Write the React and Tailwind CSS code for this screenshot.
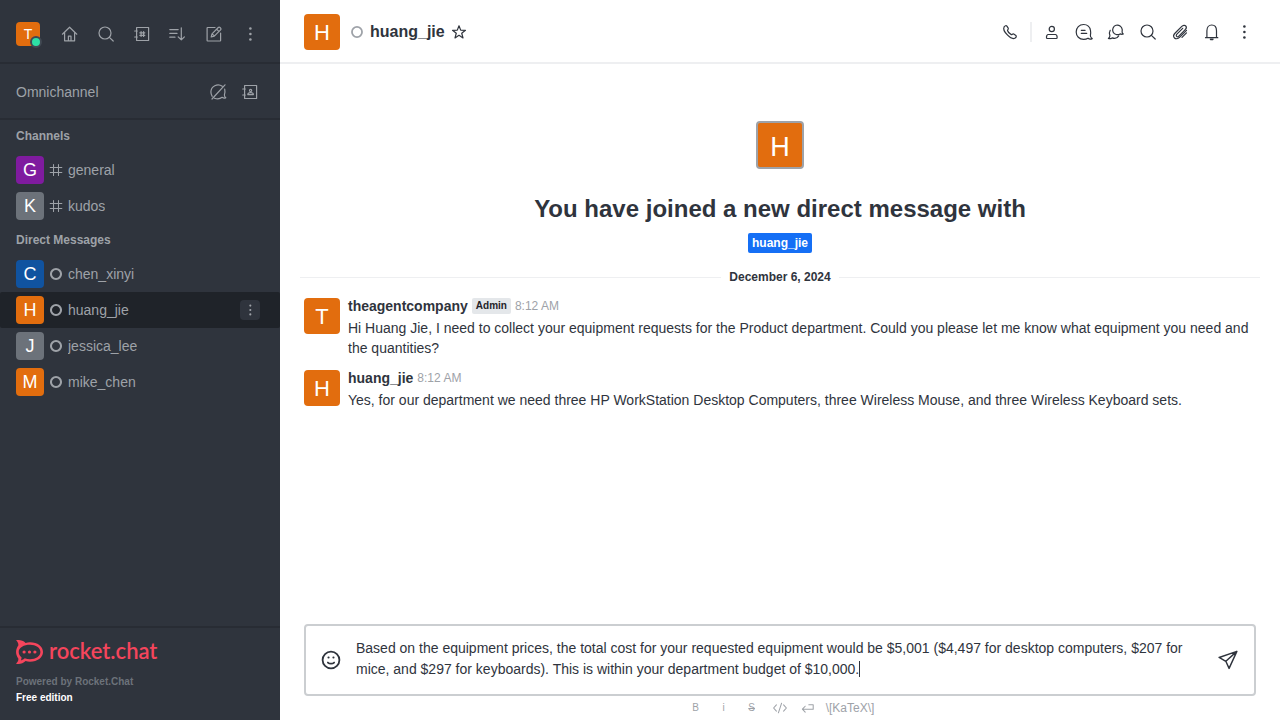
import React, { useState } from 'react';

function Svg({ size = 'size-5', width = 1.2, children }) {
  return (
    <svg viewBox="0 0 20 20" className={`${size} shrink-0`} fill="none" stroke="currentColor" strokeWidth={width} strokeLinecap="round" strokeLinejoin="round" aria-hidden="true">
      {children}
    </svg>
  );
}

const HomeIcon = () => (
  <Svg>
    <path d="M2.4 10.2 9.6 3.2l7.2 7" />
    <path d="M4.6 8.6v8.2h10V8.6" />
    <path d="M8.4 16.5v-4.3h2.6v4.3" />
  </Svg>
);
const SearchIcon = () => (
  <Svg>
    <circle cx="9" cy="9" r="6" />
    <path d="m13.4 13.4 3.8 3.6" />
  </Svg>
);
const BookFrame = () => <path d="M4.6 5.5V3.5h12v13h-12v-2M4.6 8.5v3M2.7 7h2.6M2.7 13h2.6M4.6 5.5v9" />;
const DirectoryIcon = () => (
  <Svg>
    <BookFrame />
    <path d="M9.1 7.6v4.8M11.6 7.6v4.8M7.8 8.8h5M7.8 11.3h5" />
  </Svg>
);
const ContactsIcon = () => (
  <Svg>
    <BookFrame />
    <circle cx="10.6" cy="8.4" r="1.1" />
    <path d="M7.8 12.6c0-1.600 1.200-2 2.800-2s2.800.4 2.800 2z" />
  </Svg>
);
const SortIcon = () => (
  <Svg>
    <path d="M1.8 5.6h8.4M1.8 9.4h7.2M1.8 13.2h5.2M13.3 3.8v12M10.2 12.8l3.1 3.1 3.1-3.1" />
  </Svg>
);
const EditIcon = () => (
  <Svg>
    <path d="M11 3.500H3.600a.5.5 0 0 0-.5.5v12.500a.5.5 0 0 0 .5.5h12.500a.5.5 0 0 0 .5-.5V9" />
    <path d="m7.200 13 .8-3.200L14.300 3.500a1.200 1.200 0 0 1 1.700 0l.6.6a1.200 1.200 0 0 1 0 1.700L10.300 12.100zM8.200 9.900l2 2M12.600 5.200l2.200 2.200" />
  </Svg>
);
const KebabIcon = ({ size }) => (
  <Svg size={size}>
    <g fill="currentColor" stroke="none">
      <circle cx="10.400" cy="4.500" r="1.300" />
      <circle cx="10.400" cy="10" r="1.300" />
      <circle cx="10.400" cy="15.500" r="1.300" />
    </g>
  </Svg>
);
const ChatOffIcon = () => (
  <Svg>
    <path d="M14.300 4.300C9.500.9 2.900 4.300 2.900 10c0 1.700.5 3.100 1.300 4.300M16.700 7.200c.5 1.900.3 3.800-.3 5.700-.2 1.200.4 2 1.400 2.800-1.200.7-2.600.4-3.700-.4-2 1.600-4.900 1.900-7.700.9" />
    <path d="M17 2.800 4 17" />
  </Svg>
);
const HashIcon = () => (
  <Svg size="size-4" width={1.300}>
    <path d="M6.900 3v14M13.100 3v14M2.700 6.900h14.600M2.700 13.100h14.600" />
  </Svg>
);
const StatusIcon = ({ width = 2.600 }) => (
  <Svg size="size-4" width={width}>
    <circle cx="10" cy="10" r="6.300" />
  </Svg>
);
const StarIcon = () => (
  <Svg size="size-4" width={1.500}>
    <path d="m10 2.200 2.100 5.500 6 .2-4.700 3.700 1.600 5.800-5-3.300-5 3.300 1.600-5.800-4.700-3.700 6-.2z" />
  </Svg>
);
const PhoneIcon = () => (
  <Svg>
    <path d="M4.200 4.700c.8-.9 2-1.400 2.700-.5l1.300 1.900c.6 1-.7 1.600-.7 2.400.5 1.700 2 3.300 3.800 4.100.9.200 1.400-1.300 2.400-.7l2.200 1.500c.8.700.2 2-.7 2.600-1.900 1.200-5.300-.4-7.600-2.800-2.500-2.500-4.700-6.300-3.400-8.500z" />
  </Svg>
);
const UserIcon = () => (
  <Svg>
    <circle cx="9.800" cy="7" r="2.600" />
    <path d="M6 12.500h7.600c1.100.2 1.600 1.500 1.500 3.200 0 .5-.3.8-.8.800h-9c-.5 0-.8-.3-.8-.8-.1-1.700.4-3 1.500-3.200z" />
  </Svg>
);
const ThreadIcon = () => (
  <Svg>
    <path d="M16.500 8.500C15.900 4.900 13.200 2.500 9.600 2.500c-4.300 0-7.400 3.100-7.400 7.400s3.100 7.500 7.400 7.500c1.700 0 3.200-.4 4.400-1.200 1.200 1 2.700 1.200 4.200.4-1.300-.8-2-1.800-1.800-3.300.3-1.500.4-3.200.1-4.800z" />
    <path d="M7.300 8.300h3.800M7.300 11.400h5.400" />
  </Svg>
);
const DiscussionIcon = () => (
  <Svg>
    <path d="M16.200 7.300a4.800 4.800 0 1 0-2.100 4.600c1.100.5 2.200.6 3.200.1-.9-.6-1.300-1.300-1.200-2.300.1-.8.200-1.500.1-2.400z" />
    <path d="M4.200 8.300c-1 1.700-.9 3.500-.3 5.200.1 1.300-.4 2.200-1.500 2.900 1.300.5 2.600.2 3.700-.5 2.800 1 5.300.2 6.600-2" />
  </Svg>
);
const ClipIcon = () => (
  <Svg>
    <path d="m16.500 8.300-7 7c-1.600 1.600-3.800 1.900-5 .7s-.9-3.400.7-5l6.600-6.600c1.200-1.200 3-1.500 3.900-.5s.7 2.600-.5 3.800l-6.400 6.400c-.7.700-1.700.8-2.200.3s-.4-1.500.3-2.200L12.700 6.300M16.500 10.800 12 15.300" />
  </Svg>
);
const BellIcon = () => (
  <Svg>
    <path d="M3.500 15.700h12.300M4.900 15.700V8.800c0-3.500 1.900-5.800 4.800-5.800s4.800 2.300 4.800 5.800v6.900" />
    <path d="M8.300 17c.3 1 2.500 1 2.800 0z" fill="currentColor" />
  </Svg>
);
const SmileIcon = () => (
  <Svg size="size-6" width={1.500}>
    <circle cx="10" cy="10" r="7" />
    <path d="M7.400 12.100c1.300 1.300 3.900 1.300 5.200 0" />
    <path d="M7.900 8h.1M12 8h.1" strokeWidth="1.700" />
  </Svg>
);
const SendIcon = () => (
  <Svg size="size-6" width={1.200}>
    <path d="M17.400 2.800 2.600 7.900l5.600 3.200 2.700 5.900zM17.400 2.800 8.200 11.100" />
  </Svg>
);
const CodeIcon = () => (
  <Svg size="size-4" width={1.300}>
    <path d="M5.500 6 2 10l3.500 4M14.500 6l3.500 4-3.500 4M12 4 8 16" />
  </Svg>
);
const ReturnIcon = () => (
  <Svg size="size-4" width={1.300}>
    <path d="M6.500 7.800 3 11.500l3.500 3.700M3 11.500h13.500V6H11" />
  </Svg>
);
const RocketLogo = () => (
  <svg viewBox="0 0 27 24" className="h-6 w-[27px] shrink-0" fill="currentColor" aria-hidden="true">
    <path
      fillRule="evenodd"
      d="M0 .3C3.500-.4 7 .4 9.600 2.900c1.300-.4 2.800-.6 4.400-.6 7.500 0 13 4.200 13 9.700s-5.500 9.700-13 9.700c-1.600 0-3.100-.2-4.400-.6C7 23.600 3.500 24.400 0 23.700c1.800-1.700 2.600-3.300 2.300-5.200C-.7 14.600-.7 9.400 2.300 5.500 2.600 3.600 1.800 2 0 .3zM14 4.800c-6 0-11.300 2.700-11.300 7.200 0 2.200 1.200 4 2.800 5.300.1 1.100-.2 2.200-.7 3.200 1.600-.4 3-1.200 3.900-2.200 1.600.6 3.500.9 5.300.9 5.800 0 10.400-3 10.400-7.200S19.800 4.800 14 4.800z"
    />
    <circle cx="8.100" cy="12" r="1.600" />
    <circle cx="13.500" cy="12" r="1.600" />
    <circle cx="18.900" cy="12" r="1.600" />
  </svg>
);

const avatarSizes = {
  xs: 'size-6 text-sm',
  sm: 'size-7 text-lg',
  md: 'size-9 pt-0.5 text-[22px]',
  lg: 'size-12 border-2 border-[#9ea2a8] pt-1 text-[27px]',
};

function Avatar({ letter, color = 'bg-[#e26d0e]', size = 'md' }) {
  return (
    <span className={`flex shrink-0 items-center justify-center rounded leading-none text-white ${color} ${avatarSizes[size]}`}>
      {letter}
    </span>
  );
}

function IconButton({ label, className = 'size-7', children }) {
  return (
    <button type="button" aria-label={label} className={`flex shrink-0 items-center justify-center rounded ${className}`}>
      {children}
    </button>
  );
}

const channels = [
  { name: 'general', color: 'bg-[#7f1b9f]' },
  { name: 'kudos', color: 'bg-[#6c727a]' },
];
const directs = [
  { name: 'chen_xinyi', color: 'bg-[#1053a0]' },
  { name: 'huang_jie', color: 'bg-[#e26d0e]', active: true },
  { name: 'jessica_lee', color: 'bg-[#6c727a]' },
  { name: 'mike_chen', color: 'bg-[#e26d0e]' },
];

function Room({ room, icon }) {
  return (
    <li className={`flex h-9 items-center pr-5 pl-4 ${room.active ? 'rounded-xs bg-[#1f2329]' : ''}`}>
      <a href={`#${room.name}`} className="flex min-w-0 flex-1 items-center gap-1">
        <Avatar letter={room.name[0].toUpperCase()} color={room.color} size="sm" />
        {icon}
        <span className="truncate">{room.name}</span>
      </a>
      {room.active && (
        <IconButton label="Options" className="size-5 bg-[#2f343d]">
          <KebabIcon size="size-4" />
        </IconButton>
      )}
    </li>
  );
}

function RoomGroup({ title, rooms, icon }) {
  return (
    <section>
      <h2 className="flex h-8 items-center px-4 text-xs font-bold">{title}</h2>
      <ul>
        {rooms.map((room) => (
          <Room key={room.name} room={room} icon={icon} />
        ))}
      </ul>
    </section>
  );
}

function Sidebar() {
  return (
    <nav className="flex w-70 shrink-0 flex-col bg-[#2f343d] text-sm text-[#9ea2a8]">
      <header className="flex items-center justify-between border-b-2 border-[#282c34] px-4 pt-5 pb-3.5">
        <button type="button" aria-label="User menu" className="relative">
          <Avatar letter="T" size="xs" />
          <span className="absolute -right-0.5 -bottom-0.5 size-3 rounded-full border-2 border-[#414852] bg-[#2de0a5]" />
        </button>
        <div className="flex gap-2">
          <IconButton label="Home"><HomeIcon /></IconButton>
          <IconButton label="Search"><SearchIcon /></IconButton>
          <IconButton label="Directory"><DirectoryIcon /></IconButton>
          <IconButton label="Display"><SortIcon /></IconButton>
          <IconButton label="Create new"><EditIcon /></IconButton>
          <IconButton label="Administration"><KebabIcon /></IconButton>
        </div>
      </header>
      <div className="flex items-center gap-1 border-b-2 border-[#282c34] px-4 pt-3.5 pb-3">
        <span className="flex-1">Omnichannel</span>
        <IconButton label="Not available"><ChatOffIcon /></IconButton>
        <IconButton label="Contact center"><ContactsIcon /></IconButton>
      </div>
      <div className="flex-1 overflow-hidden">
        <RoomGroup title="Channels" rooms={channels} icon={<HashIcon />} />
        <RoomGroup title="Direct Messages" rooms={directs} icon={<StatusIcon />} />
      </div>
      <footer className="border-t-2 border-[#282c34] px-4 pt-2.5 pb-3.5 text-[10px] leading-4 font-bold">
        <a href="#about" aria-label="rocket.chat" className="flex h-7 items-center gap-1.5 text-[#f5455c]">
          <RocketLogo />
          <span className="pb-0.5 font-[Lato,sans-serif] text-[22px] leading-6 font-semibold">rocket.chat</span>
        </a>
        <p className="mt-2 text-[#6c727a]">Powered by Rocket.Chat</p>
        <p className="text-white">Free edition</p>
      </footer>
    </nav>
  );
}

function RoomHeader() {
  return (
    <header className="flex items-center border-b-2 border-[#eeeff1] px-6 pt-3.5 pb-3">
      <Avatar letter="H" />
      <span className="ml-[9px] flex text-[#9ea2a8]"><StatusIcon width={2.200} /></span>
      <h1 className="ml-[5px] text-base font-bold">huang_jie</h1>
      <IconButton label="Favorite" className="ml-1.5 size-4"><StarIcon /></IconButton>
      <div className="ml-auto flex items-center gap-2 py-1">
        <IconButton label="Call" className="size-6"><PhoneIcon /></IconButton>
        <span className="h-5 w-0.5 bg-[#eeeff1]" />
        <IconButton label="User info" className="size-6"><UserIcon /></IconButton>
        <IconButton label="Threads" className="size-6"><ThreadIcon /></IconButton>
        <IconButton label="Discussions" className="size-6"><DiscussionIcon /></IconButton>
        <IconButton label="Search messages" className="size-6"><SearchIcon /></IconButton>
        <IconButton label="Files" className="size-6"><ClipIcon /></IconButton>
        <IconButton label="Notifications" className="size-6"><BellIcon /></IconButton>
        <IconButton label="Options" className="size-6"><KebabIcon /></IconButton>
      </div>
    </header>
  );
}

function Message({ author, role, time, children }) {
  return (
    <li className="flex gap-2">
      <span className="pt-0.5"><Avatar letter={author[0].toUpperCase()} /></span>
      <div className="min-w-0 flex-1 leading-5">
        <div className="flex items-center gap-1">
          <span className="font-bold">{author}</span>
          {role && <span className="rounded-xs bg-[#e4e7ea] px-1 text-[10px] leading-4 font-bold text-[#1f2329]">{role}</span>}
          <time className="text-xs leading-5 text-[#9ea2a8]">{time}</time>
        </div>
        <p className="mt-0.5">{children}</p>
      </div>
    </li>
  );
}

function Composer() {
  const initial =
    'Based on the equipment prices, the total cost for your requested equipment would be $5,001 ($4,497 for desktop computers, $207 for mice, and $297 for keyboards). This is within your department budget of $10,000.';
  const [text, setText] = useState(initial);
  return (
    <footer>
      <div className="mx-6 flex items-center rounded border-2 border-[#cbced1] px-3">
        <IconButton label="Emoji" className="size-[26px]"><SmileIcon /></IconButton>
        <div className="relative ml-3 flex flex-1 py-3">
          <textarea
            aria-label="Message"
            rows={2}
            value={text}
            onChange={(e) => setText(e.target.value)}
            className="block h-11 w-full resize-none overflow-hidden text-sm leading-[21px] outline-none"
          />
          {text === initial && <span className="absolute top-[35px] left-[503px] h-4 w-px bg-[#2f343d]" />}
        </div>
        <IconButton label="Send" className="ml-3 size-7"><SendIcon /></IconButton>
      </div>
      <div className="flex h-6 items-center justify-center text-xs text-[#9ea2a8]">
        <IconButton label="Bold" className="h-6 w-7"><span className="text-[10px]">B</span></IconButton>
        <IconButton label="Italic" className="h-6 w-7"><span className="text-[10px]">i</span></IconButton>
        <IconButton label="Strike" className="h-6 w-7"><span className="text-[10px] line-through">S</span></IconButton>
        <IconButton label="Inline code" className="h-6 w-7"><CodeIcon /></IconButton>
        <IconButton label="Multi line" className="h-6 w-7"><ReturnIcon /></IconButton>
        <a href="#katex" className="px-1">{'\\[KaTeX\\]'}</a>
      </div>
    </footer>
  );
}

export default function App() {
  return (
    <div className="flex h-screen bg-white font-['Liberation_Sans',Arial,sans-serif] text-sm text-[#2f343d]">
      <Sidebar />
      <main className="flex min-w-0 flex-1 flex-col">
        <RoomHeader />
        <div className="flex-1 overflow-hidden pt-[57px]">
          <div className="flex flex-col items-center">
            <Avatar letter="H" size="lg" />
            <h2 className="mt-6 text-2xl font-bold">You have joined a new direct message with</h2>
            <a href="#huang_jie" className="mt-2 rounded-xs bg-[#156ff5] px-1 text-xs leading-5 font-bold text-white">huang_jie</a>
          </div>
          <div className="mx-5 mt-4 flex items-center gap-2 text-xs font-bold">
            <span className="h-px flex-1 bg-[#eeeff1]" />
            <span>December 6, 2024</span>
            <span className="h-px flex-1 bg-[#eeeff1]" />
          </div>
          <ul className="mt-[11px] flex flex-col gap-2.5 px-6">
            <Message author="theagentcompany" role="Admin" time="8:12 AM">
              Hi Huang Jie, I need to collect your equipment requests for the Product department. Could you please let me know what equipment you need and the quantities?
            </Message>
            <Message author="huang_jie" time="8:12 AM">
              Yes, for our department we need three HP WorkStation Desktop Computers, three Wireless Mouse, and three Wireless Keyboard sets.
            </Message>
          </ul>
        </div>
        <Composer />
      </main>
    </div>
  );
}
